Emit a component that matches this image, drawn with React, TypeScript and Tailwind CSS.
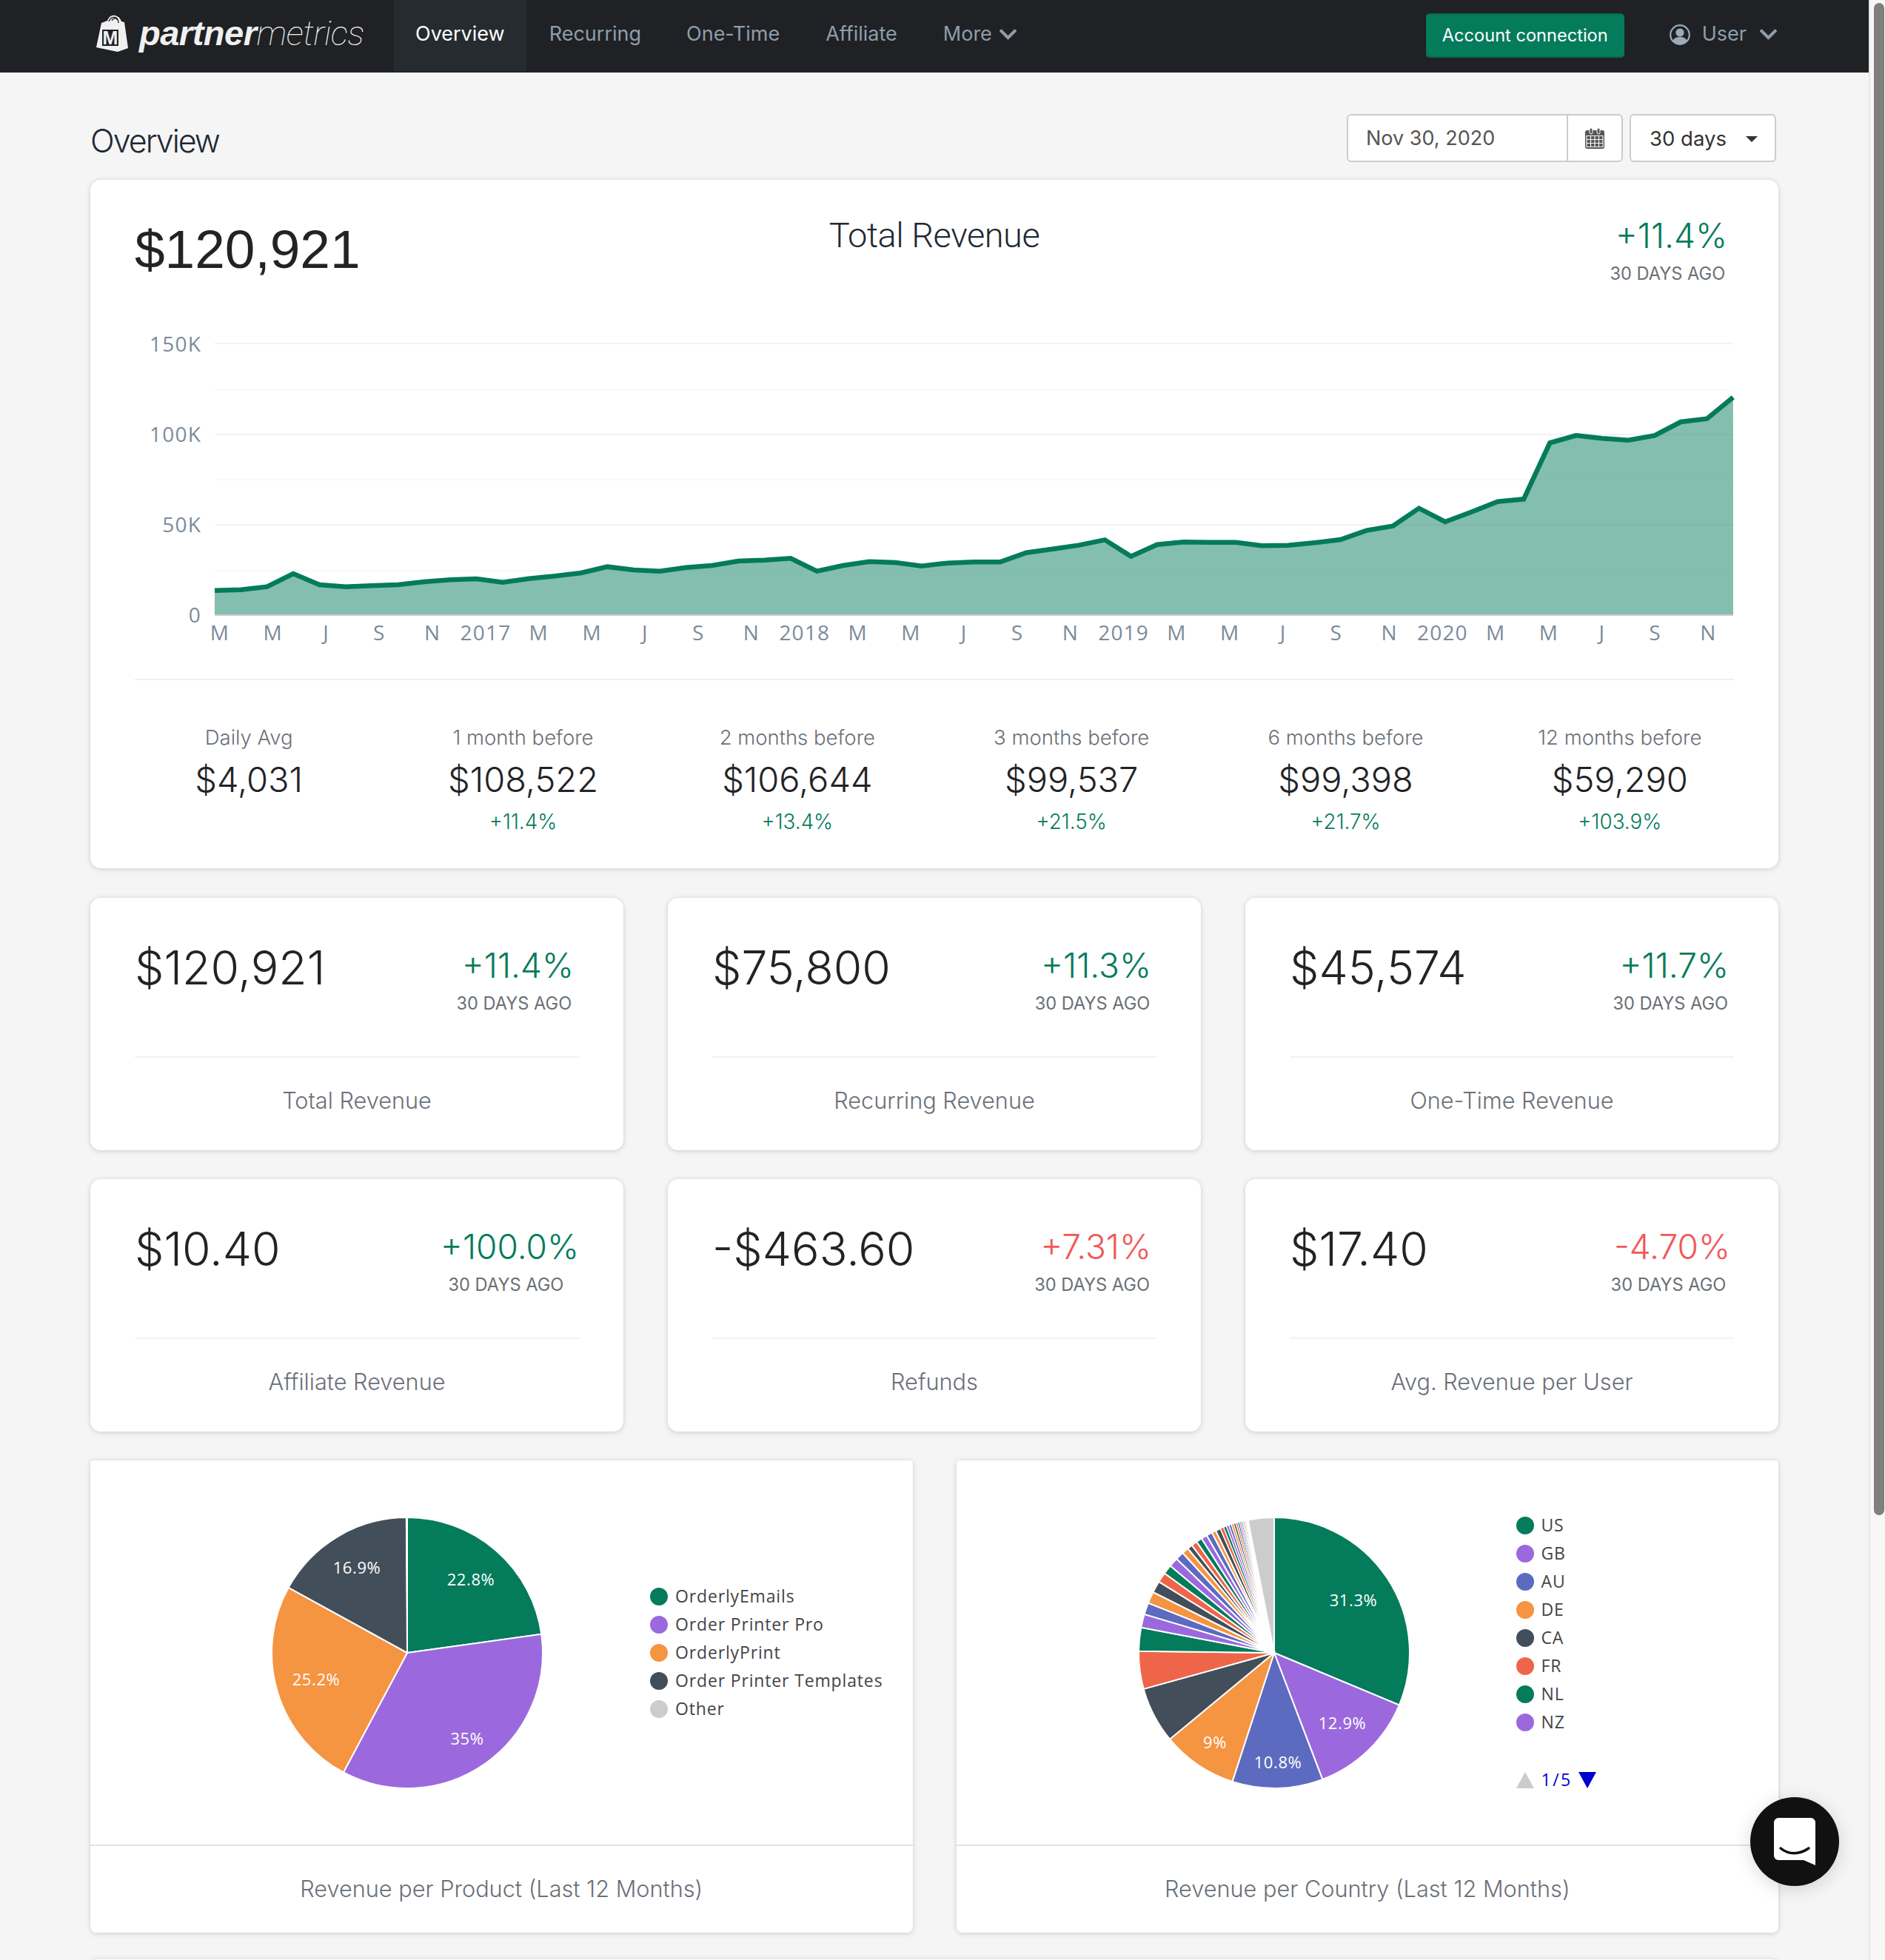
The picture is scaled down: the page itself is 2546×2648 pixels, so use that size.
import React from 'react';
import { FaChevronDown } from 'react-icons/fa';

const GREEN = '#047b5b';
const PURPLE = '#9b69dd';
const INDIGO = '#5c6bc0';
const ORANGE = '#f59441';
const SLATE = '#434e5b';
const RED = '#ef6549';
const OTHER = '#cccccc';

// line readings taken off the chart, 59 months left to right
const lineReadings = [
  1133, 1130, 1118, 1065, 1110, 1118, 1114, 1110, 1098, 1090, 1086, 1100, 1085, 1075, 1062, 1037, 1050, 1055, 1040, 1032, 1014, 1010, 1003, 1055, 1032,
  1016, 1020, 1034, 1022, 1018, 1018, 980, 965, 950, 928, 995, 947, 937, 938, 938, 952, 950, 940, 927, 890, 872, 800, 855, 815, 773, 763, 535, 505, 517,
  524, 505, 450, 437, 350,
];

const xLabels = ['M', 'M', 'J', 'S', 'N', '2017', 'M', 'M', 'J', 'S', 'N', '2018', 'M', 'M', 'J', 'S', 'N', '2019', 'M', 'M', 'J', 'S', 'N', '2020', 'M', 'M', 'J', 'S', 'N'];

const stats = [
  { label: 'Daily Avg', value: '$4,031', pct: '' },
  { label: '1 month before', value: '$108,522', pct: '+11.4%' },
  { label: '2 months before', value: '$106,644', pct: '+13.4%' },
  { label: '3 months before', value: '$99,537', pct: '+21.5%' },
  { label: '6 months before', value: '$99,398', pct: '+21.7%' },
  { label: '12 months before', value: '$59,290', pct: '+103.9%' },
];

const cards = [
  { value: '$120,921', pct: '+11.4%', label: 'Total Revenue', bad: false, pad: 'pr-[7px]' },
  { value: '$75,800', pct: '+11.3%', label: 'Recurring Revenue', bad: false, pad: 'pr-[7px]' },
  { value: '$45,574', pct: '+11.7%', label: 'One-Time Revenue', bad: false, pad: 'pr-[7px]' },
  { value: '$10.40', pct: '+100.0%', label: 'Affiliate Revenue', bad: false, pad: 'pr-0' },
  { value: '-$463.60', pct: '+7.31%', label: 'Refunds', bad: true, pad: 'pr-[7px]' },
  { value: '$17.40', pct: '-4.70%', label: 'Avg. Revenue per User', bad: true, pad: 'pr-[5px]' },
];

const cycle = [GREEN, PURPLE, INDIGO, ORANGE, SLATE, RED];

const productSlices = [
  { v: 22.8, c: GREEN },
  { v: 35, c: PURPLE },
  { v: 25.2, c: ORANGE },
  { v: 16.9, c: SLATE },
  { v: 0.1, c: OTHER },
];

const countryShares = [
  31.3, 12.9, 10.8, 9, 6.7, 4.5, 2.8, 1.6, 1.4, 1.4, 1.4, 1.2, 1.1, 1.1, 1, 0.8, 0.6, 0.7, 0.7, 0.7, 0.7, 0.5, 0.6, 0.4, 0.35,
  0.32, 0.3, 0.28, 0.26, 0.24, 0.22, 0.2, 0.18, 0.16, 0.14, 0.12, 0.1,
];
const countrySlices = [
  ...countryShares.map((v, i) => ({ v, c: cycle[i % 6] })),
  { v: 100 - countryShares.reduce((a, b) => a + b, 0) - 3.1, c: '#ffffff' },
  { v: 3.1, c: OTHER },
];

function Pie({ slices, labels }: { slices: { v: number; c: string }[]; labels: { x: number; y: number; t: string }[] }) {
  const r = 183;
  let acc = 0;
  return (
    <svg width="400" height="400" viewBox="-200 -200 400 400" className="shrink-0">
      {slices.map((s, i) => {
        const a0 = (acc / 100) * Math.PI * 2;
        acc += s.v;
        const a1 = (acc / 100) * Math.PI * 2;
        const large = s.v > 50 ? 1 : 0;
        const d = `M0 0L${r * Math.sin(a0)} ${-r * Math.cos(a0)}A${r} ${r} 0 ${large} 1 ${r * Math.sin(a1)} ${-r * Math.cos(a1)}Z`;
        return <path key={i} d={d} fill={s.c} stroke="#fff" strokeWidth={s.v < 0.5 ? 1.2 : 2} />;
      })}
      {labels.map((l) => (
        <text key={l.t} x={l.x} y={l.y} dy="8" textAnchor="middle" fill="#fff" fontSize="22" fontFamily="Open Sans, sans-serif" letterSpacing="0.6">
          {l.t}
        </text>
      ))}
    </svg>
  );
}

function LegendRow({ color, name }: { color: string; name: string }) {
  return (
    <div className="flex items-center h-[38px] gap-[10px]">
      <span className="w-[24px] h-[24px] rounded-full shrink-0" style={{ backgroundColor: color }} />
      <span className="text-[23px] tracking-[0.85px] text-[#444444] font-['Open_Sans',sans-serif] whitespace-nowrap">{name}</span>
    </div>
  );
}

function Delta({ pct, bad, pad }: { pct: string; bad: boolean; pad: string }) {
  return (
    <div className={`flex flex-col items-center mt-[66px] ${pad}`}>
      <div className={`ml-[10px] text-[46px] leading-[50px] font-light ${bad ? 'text-[#f25858]' : 'text-[#047b5b]'}`}>{pct}</div>
      <div className="mt-[12px] text-[23.6px] leading-[30px] text-[#6b6f76]">30 DAYS AGO</div>
    </div>
  );
}

function MetricCard({ value, pct, label, bad, pad }: { value: string; pct: string; label: string; bad: boolean; pad: string }) {
  return (
    <div className="h-[341px] bg-white rounded-[14px] shadow-[0_0_6px_rgba(0,0,0,0.13),0_4px_8px_rgba(0,0,0,0.05)] px-[60px]">
      <div className="flex justify-between items-start h-[216px] border-b-2 border-[#f2f2f2]">
        <div className="mt-[58px] text-[62.5px] leading-[72px] font-light text-[#222326]">{value}</div>
        <Delta pct={pct} bad={bad} pad={pad} />
      </div>
      <div className="mt-[38px] text-center text-[30.7px] leading-[40px] font-light text-[#6b7078]">{label}</div>
    </div>
  );
}

export default function App() {
  const points = lineReadings.map((z, i) => `${290 + i * 35.36},${420 + z / 3}`);
  const line = points.join(' ');
  const area = `290,830 ${line} 2341,830`;

  return (
    <div className="relative flex w-[2546px] h-[2648px] overflow-hidden bg-[#f5f5f5] font-[Inter,sans-serif]">
      <div className="w-[2524px] shrink-0">
        {/* Navbar */}
        <nav className="h-[98px] bg-[#1f2124] flex items-start pl-[130px] pr-[122px]">
          <div className="flex items-center h-[90px] gap-[14px] w-[402px] shrink-0">
            <svg width="44" height="50" viewBox="0 0 44 50" className="shrink-0">
              <path d="M7 11 L15 8 C17 1 24 -1 28 2 C31 3 33 6 34 9 L38 10 L43 45 L29 50 L0 44 Z" fill="#f0f0f0" />
              <path d="M17 9 C19 3 25 2 28 5 C30 7 30 9 30 11 M21 8 C23 4 27 4 29 7" fill="none" stroke="#1f2124" strokeWidth="1.5" />
              <rect x="8" y="20" width="22" height="22" fill="#1f2124" />
              <text x="19" y="40" textAnchor="middle" fontSize="25" fontWeight="700" fill="#f0f0f0" fontFamily="Liberation Sans, sans-serif">M</text>
            </svg>
            <span className="text-[47px] italic text-[#f0f0f0] whitespace-nowrap tracking-[-0.5px]">
              <span className="font-['Liberation_Sans',sans-serif] font-bold">partner</span>
              <span className="font-[Roboto,sans-serif] font-thin">metrics</span>
            </span>
          </div>
          <div className="flex items-center h-[96px] text-[27px] text-[#8f9dab]">
            <span className="h-[96px] flex items-center pb-[3px] px-[29px] bg-[#262b30] text-white">Overview</span>
            <span className="px-[29px] pb-[3px] ml-[2px]">Recurring</span>
            <span className="px-[29px] pb-[3px] ml-[3px]">One-Time</span>
            <span className="px-[29px] pb-[3px] ml-[4px]">Affiliate</span>
            <span className="pl-[29px] pb-[3px] ml-[4px] flex items-center gap-[8px]">
              More <FaChevronDown className="w-[27px] h-[27px]" />
            </span>
          </div>
          <div className="ml-auto flex items-center h-[96px]">
            <button className="h-[60px] w-[268px] rounded-[5px] bg-[#047b5b] border-y-2 border-[#036b4f] text-white text-[23.6px]">Account connection</button>
            <svg width="28" height="28" viewBox="0 0 28 28" className="ml-[61px] mb-[3px] text-[#9aabba]">
              <circle cx="14" cy="14" r="12.8" fill="none" stroke="currentColor" strokeWidth="2.2" />
              <circle cx="14" cy="11" r="5.6" fill="currentColor" />
              <path d="M4.5 22C6 18 10 17 14 17C18 17 22 18 23.5 22C21 25.5 17.5 27 14 27C10.5 27 7 25.5 4.5 22Z" fill="currentColor" />
            </svg>
            <span className="ml-[16px] mb-[3px] text-[27px] text-[#8f9dab]">User</span>
            <FaChevronDown className="ml-[16px] mb-[3px] w-[27px] h-[27px] text-[#8f9dab]" />
          </div>
        </nav>

        <main className="px-[122px] pt-[56px]">
          {/* Title and date controls */}
          <div className="flex justify-between items-center h-[65px]">
            <h1 className="text-[43px] font-light text-[#1f2933] tracking-[-2px] mt-[7px]">Overview</h1>
            <div className="flex mr-[3px] gap-[9px]">
              <div className="flex w-[373px] h-[65px] bg-white rounded-[6px] border-2 border-[#cccccc]">
                <div className="w-[297px] border-r-2 border-[#cccccc] pl-[24px] pt-[2px] flex items-center text-[27px] text-[#555555]">Nov 30, 2020</div>
                <div className="flex-1 flex items-center justify-center">
                  <svg width="26" height="28" viewBox="0 0 26 28">
                    <rect x="0" y="3" width="26" height="25" rx="3" fill="#555" />
                    <rect x="6" y="0" width="4" height="8" rx="2" fill="#555" stroke="#fff" strokeWidth="1" />
                    <rect x="16" y="0" width="4" height="8" rx="2" fill="#555" stroke="#fff" strokeWidth="1" />
                    <g fill="none" stroke="#f5f5f5" strokeWidth="1.2">
                      <path d="M2 10.5H24V25.5H2ZM2 15.5H24M2 20.5H24M7.5 10.5V25.5M13 10.5V25.5M18.5 10.5V25.5" />
                    </g>
                  </svg>
                </div>
              </div>
              <div className="flex items-center justify-between w-[198px] h-[65px] bg-white rounded-[6px] border-2 border-[#cccccc] pl-[25px] pr-[23px] pt-[2px] text-[27.5px] text-[#333333]">
                <span>30 days</span>
                <span className="w-0 h-0 border-x-[8px] border-x-transparent border-t-[8px] border-t-[#333333]" />
              </div>
            </div>
          </div>

          {/* Total revenue */}
          <section className="mt-[24px] h-[930px] bg-white rounded-[14px] shadow-[0_0_6px_rgba(0,0,0,0.13),0_4px_8px_rgba(0,0,0,0.05)]">
            <div className="grid grid-cols-[1fr_auto_1fr] items-start h-[197px] px-[60px]">
              <div className="mt-[54px] text-[73px] leading-[80px] font-['Liberation_Sans',sans-serif] text-[#222326]">$120,921</div>
              <div className="mt-[47px] text-[47px] leading-[56px] font-[Roboto,sans-serif] font-light text-[#1f2933] tracking-[-0.5px]">Total Revenue</div>
              <div className="justify-self-end flex flex-col items-center pr-[9px]">
                <div className="mt-[50px] ml-[10px] text-[46px] leading-[50px] font-light text-[#047b5b]">+11.4%</div>
                <div className="mt-[12px] text-[23.6px] leading-[30px] text-[#6b6f76]">30 DAYS AGO</div>
              </div>
            </div>

            <svg width="2280" height="450" viewBox="122 440 2280 450" className="block">
              {[464, 587, 709].map((y) => (
                <line key={y} x1="290" x2="2341" y1={y} y2={y} stroke="#f3f3f3" strokeWidth="2" />
              ))}
              {[527, 648, 771].map((y) => (
                <line key={y} x1="290" x2="2341" y1={y} y2={y} stroke="#f9f9f9" strokeWidth="2" />
              ))}
              <polygon points={area} fill={GREEN} fillOpacity="0.49" />
              <polyline points={line} fill="none" stroke={GREEN} strokeWidth="6.5" strokeLinejoin="miter" />
              <line x1="290" x2="2341" y1="831" y2="831" stroke="#cccccc" strokeWidth="2" />
              {[['150K', 475], ['100K', 597], ['50K', 719], ['0', 841]].map(([t, y]) => (
                <text key={t} x="272" y={y} textAnchor="end" fontSize="28" fill="#7b8b9b" fontFamily="Open Sans, sans-serif" letterSpacing="1.2">
                  {t}
                </text>
              ))}
              {xLabels.map((t, i) => (
                <text key={i} x={297 + i * 71.8} y="865" textAnchor="middle" fontSize="28" fill="#7b8b9b" fontFamily="Open Sans, sans-serif" letterSpacing="1.2">
                  {t}
                </text>
              ))}
            </svg>

            <div className="mx-[60px] mt-[27px] border-t-2 border-[#f0f0f0]" />
            <div className="grid grid-cols-6 mx-[29px] mt-[59px]">
              {stats.map((s) => (
                <div key={s.label} className="text-center">
                  <div className="text-[27.5px] leading-[36px] font-light text-[#6b7078]">{s.label}</div>
                  <div className="mt-[9px] text-[47px] leading-[60px] font-light text-[#222326]">{s.value}</div>
                  <div className="mt-[9px] text-[27.8px] leading-[36px] font-light text-[#047b5b]">{s.pct}</div>
                </div>
              ))}
            </div>
          </section>

          {/* Metric cards */}
          <div className="grid grid-cols-3 gap-x-[60px] gap-y-[39px] mt-[40px]">
            {cards.map((c) => (
              <MetricCard key={c.label} {...c} />
            ))}
          </div>

          {/* Pies */}
          <div className="grid grid-cols-2 gap-x-[59px] mt-[39px]">
            <div className="bg-white rounded-b-[8px] rounded-t-[4px] shadow-[0_0_6px_rgba(0,0,0,0.13),0_4px_8px_rgba(0,0,0,0.05)]">
              <div className="h-[521px] flex items-center pl-[228px] border-b-2 border-[#e2e2e2]">
                <Pie
                  slices={productSlices}
                  labels={[
                    { x: 86, y: -99, t: '22.8%' },
                    { x: 81, y: 116, t: '35%' },
                    { x: -123, y: 36, t: '25.2%' },
                    { x: -68, y: -115, t: '16.9%' },
                  ]}
                />
                <div className="ml-[128px]">
                  <LegendRow color={GREEN} name="OrderlyEmails" />
                  <LegendRow color={PURPLE} name="Order Printer Pro" />
                  <LegendRow color={ORANGE} name="OrderlyPrint" />
                  <LegendRow color={SLATE} name="Order Printer Templates" />
                  <LegendRow color={OTHER} name="Other" />
                </div>
              </div>
              <div className="h-[117px] flex items-center justify-center text-[30.7px] font-light text-[#6b7078]">Revenue per Product (Last 12 Months)</div>
            </div>

            <div className="bg-white rounded-b-[8px] rounded-t-[4px] shadow-[0_0_6px_rgba(0,0,0,0.13),0_4px_8px_rgba(0,0,0,0.05)]">
              <div className="h-[521px] flex items-center pl-[229px] border-b-2 border-[#e2e2e2]">
                <Pie
                  slices={countrySlices}
                  labels={[
                    { x: 107, y: -71, t: '31.3%' },
                    { x: 92, y: 95, t: '12.9%' },
                    { x: 5, y: 148, t: '10.8%' },
                    { x: -80, y: 121, t: '9%' },
                  ]}
                />
                <div className="ml-[127px]">
                  <LegendRow color={GREEN} name="US" />
                  <LegendRow color={PURPLE} name="GB" />
                  <LegendRow color={INDIGO} name="AU" />
                  <LegendRow color={ORANGE} name="DE" />
                  <LegendRow color={SLATE} name="CA" />
                  <LegendRow color={RED} name="FR" />
                  <LegendRow color={GREEN} name="NL" />
                  <LegendRow color={PURPLE} name="NZ" />
                  <div className="flex items-center mt-[40px] h-[38px] gap-[8px]">
                    <span className="w-0 h-0 border-x-[12px] border-x-transparent border-b-[22px] border-b-[#cccccc]" />
                    <span className="ml-[2px] text-[23px] tracking-[2.5px] text-[#0000cc] font-['Open_Sans',sans-serif]">1/5</span>
                    <span className="w-0 h-0 border-x-[12px] border-x-transparent border-t-[22px] border-t-[#0000cc]" />
                  </div>
                </div>
              </div>
              <div className="h-[117px] flex items-center justify-center text-[30.7px] font-light text-[#6b7078]">Revenue per Country (Last 12 Months)</div>
            </div>
          </div>

          {/* Next row, only its top edge is in view */}
          <div className="mt-[36px] h-[100px] bg-white rounded-[8px] shadow-[0_0_6px_rgba(0,0,0,0.13)]" />
        </main>
      </div>

      {/* Scrollbar */}
      <div className="w-[22px] shrink-0 border-l-2 border-[#e6e6e6] bg-[#f7f7f7] pl-[5px] pt-[4px]">
        <div className="w-[14px] h-[2043px] rounded-full bg-[#7f7f7f]" />
      </div>

      {/* Chat launcher */}
      <div className="absolute left-[2364px] top-[2428px] w-[120px] h-[120px] rounded-full bg-[#111111] flex items-center justify-center shadow-[0_4px_24px_rgba(0,0,0,0.15)]">
        <svg width="56" height="64" viewBox="0 0 56 64">
          <path d="M6 0H50C53 0 56 3 56 6V64L40 57H6C3 57 0 54 0 51V6C0 3 3 0 6 0Z" fill="#fff" />
          <path d="M9 41C20 50 34 50 47 41" fill="none" stroke="#111" strokeWidth="3.5" strokeLinecap="round" />
        </svg>
      </div>
    </div>
  );
}
